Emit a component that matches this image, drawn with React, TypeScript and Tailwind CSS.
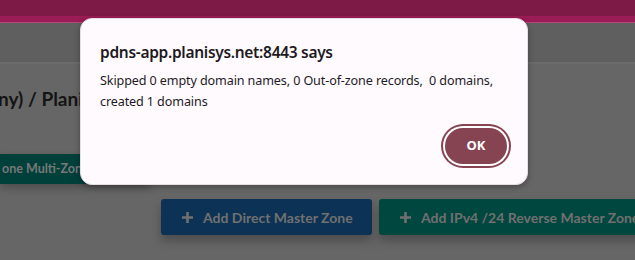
import React from "react";

function Plus() {
  return (
    <svg width="13" height="13" viewBox="0 0 13 13" className="shrink-0">
      <path d="M6.5 1v11M1 6.5h11" stroke="#707070" strokeWidth="2.6" />
    </svg>
  );
}

export default function App() {
  return (
    <div className="relative w-[635px] h-[260px] overflow-hidden bg-[#666666]" style={{ fontFamily: "Lato, sans-serif" }}>
      <div className="h-[16px] bg-[#7d1a45]" />
      <div className="h-[6px] bg-[#9b1c56]" />
      <div className="h-[1px] bg-[#b3477a]" />
      <div className="h-[39px] bg-[#5f5f5f]" />
      <div className="h-[2px] bg-[#6c6c6c]" />
      <div className="flex flex-col">
        <div className="mt-[22px] ml-[-2px] h-[26px] text-[19px] font-bold text-[#141414] whitespace-nowrap leading-[26px]">
          ny) / Planisys Zones
        </div>
        <div className="mt-[42px] flex">
          <div className="w-[150px] h-[30px] bg-[#00403a] flex items-center pl-[2px] text-[12.5px] font-bold text-[#787878] whitespace-nowrap overflow-hidden shadow-[0_4px_8px_rgba(0,0,0,0.25)]">
            one Multi-Zone Import
          </div>
        </div>
        <div className="mt-[15px] flex gap-[7px] pl-[161px]">
          <div className="w-[211px] h-[36px] shrink-0 rounded-[3px] bg-[#0c3355] flex items-center pl-[20px] gap-[9px] text-[14px] font-bold text-[#707070] whitespace-nowrap shadow-[0_6px_10px_rgba(0,0,0,0.25)]">
            <Plus />
            Add Direct Master Zone
          </div>
          <div className="w-[276px] h-[36px] shrink-0 rounded-[3px] bg-[#00473f] flex items-center pl-[20px] gap-[9px] text-[14px] font-bold text-[#707070] whitespace-nowrap shadow-[0_6px_10px_rgba(0,0,0,0.25)]">
            <Plus />
            Add IPv4 /24 Reverse Master Zone
          </div>
        </div>
      </div>

      <div
        className="absolute left-[80px] top-[18px] w-[448px] h-[167px] rounded-[12px] bg-[#fefafe] border border-[#e8dde4] shadow-[0_2px_6px_rgba(0,0,0,0.3)] pt-[21px] pl-[19px] pr-[16px]"
        style={{ fontFamily: "'Noto Sans', sans-serif" }}
      >
        <div className="text-[15.5px] leading-[24px] font-semibold text-[#1f1a1f] tracking-[-0.3px] whitespace-nowrap">pdns-app.planisys.net:8443 says</div>
        <div className="mt-[6px] text-[12.6px] leading-[21px] text-[#1f1a1f] tracking-[-0.12px]">
          <div className="whitespace-pre">{"Skipped 0 empty domain names, 0 Out-of-zone records,  0 domains,"}</div>
          <div className="whitespace-pre">created 1 domains</div>
        </div>
        <div className="flex justify-end mt-[16px] pr-[4px]">
          <button className="w-[62px] h-[36px] rounded-full bg-[#864352] text-white text-[13px] font-bold shadow-[0_0_0_2px_#ffffff,0_0_0_4px_#864352]">
            OK
          </button>
        </div>
      </div>
    </div>
  );
}
